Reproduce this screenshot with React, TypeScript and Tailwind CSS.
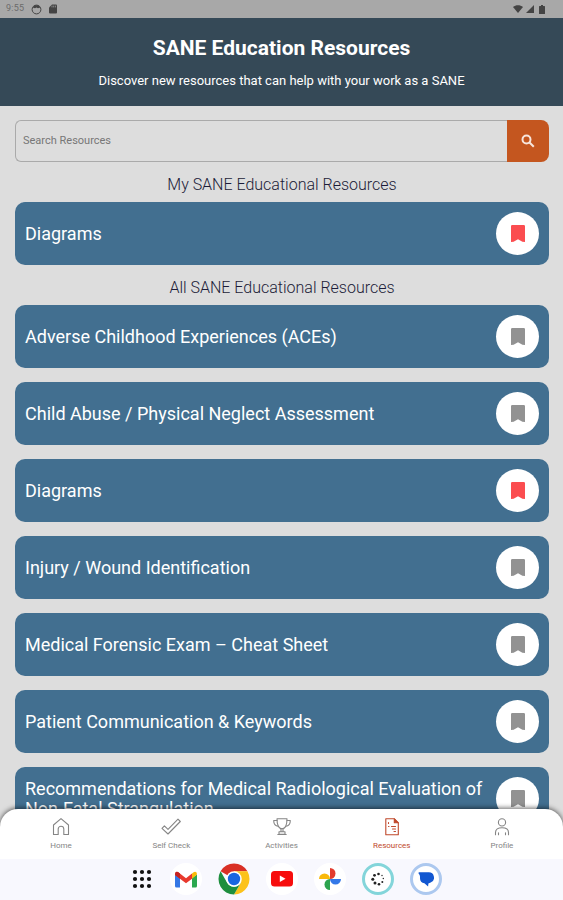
import type { ReactNode } from 'react'
import { clsx } from 'clsx'

interface Resource {
  title: string
  saved?: boolean
}

const RESOURCES: Resource[] = [
  { title: 'Adverse Childhood Experiences (ACEs)' },
  { title: 'Child Abuse / Physical Neglect Assessment' },
  { title: 'Diagrams', saved: true },
  { title: 'Injury / Wound Identification' },
  { title: 'Medical Forensic Exam – Cheat Sheet' },
  { title: 'Patient Communication & Keywords' },
  { title: 'Recommendations for Medical Radiological Evaluation of Non-Fatal Strangulation' },
]

function StatusBar() {
  return (
    <div className="flex h-[18px] shrink-0 items-center justify-between bg-[#a8a8a8] pr-[18px] pl-[6px] text-[#444]">
      <div className="flex items-center gap-[7px]">
        <span className="text-[9px] tracking-wide text-[#6b6b6b]">9:55</span>
        <svg width="11" height="11" viewBox="0 0 11 11" fill="none">
          <circle cx="5.5" cy="5.5" r="4.4" stroke="currentColor" />
          <path d="M1.6 3.6 3.5 1.2h4l1.9 2.4-2.4.7-1.5-.8-1.5.8z" fill="currentColor" />
        </svg>
        <svg width="8" height="10" viewBox="0 0 8 10" fill="currentColor">
          <path d="M3 .5h4a1 1 0 0 1 1 1v7a1 1 0 0 1-1 1H1a1 1 0 0 1-1-1v-5z" />
          <path d="M3 1.6v1.8M4.7 1.6v1.8M6.4 1.6v1.8" stroke="#a8a8a8" strokeWidth=".7" />
        </svg>
      </div>
      <div className="flex items-center gap-[3px]">
        <svg width="10" height="8" viewBox="0 0 10 8" fill="currentColor">
          <path d="M0 2C2.8-.4 7.2-.4 10 2L5 8z" />
        </svg>
        <svg width="8" height="8" viewBox="0 0 8 8" fill="currentColor">
          <path d="M8 0v8H0z" />
        </svg>
        <svg className="ml-[2px]" width="6" height="9" viewBox="0 0 6 9" fill="currentColor">
          <path d="M2 0h2v1h1.4q.6 0 .6.6v6.8q0 .6-.6.6H.6Q0 9 0 8.400V1.600Q0 1 .6 1H2z" />
        </svg>
      </div>
    </div>
  )
}

function ResourceCard({ title, saved = false }: Resource) {
  return (
    <li className="flex items-center justify-between gap-2 rounded-[10px] bg-[#426f90] p-[10px]">
      <a href="#" className="text-[18px] leading-5 text-white">
        {title}
      </a>
      <button
        type="button"
        aria-label={saved ? `Remove ${title} from my resources` : `Save ${title}`}
        aria-pressed={saved}
        className={clsx(
          'flex size-[43px] shrink-0 items-center justify-center rounded-full bg-white',
          saved ? 'text-[#fb4d50]' : 'text-[#929292]',
        )}
      >
        <svg width="14" height="17" viewBox="0 0 14 17" fill="currentColor">
          <path d="M1.200 0h11.600Q14 0 14 1.200V17l-2.600-.2L7 14.200 2.600 16.800 0 17V1.200Q0 0 1.200 0z" />
        </svg>
      </button>
    </li>
  )
}

function SectionTitle({ children }: { children: ReactNode }) {
  return (
    <h2 className="pt-[13px] pb-[7px] text-center text-[16px] leading-5 font-light text-[#1c1c38]">
      {children}
    </h2>
  )
}

interface TabProps {
  label: string
  active?: boolean
  children: ReactNode
}

function Tab({ label, active = false, children }: TabProps) {
  return (
    <a
      href="#"
      aria-current={active ? 'page' : undefined}
      className={clsx(
        'flex flex-1 flex-col items-center gap-[3px] pt-2 pb-[7px] text-[8px] leading-3',
        active ? 'text-[#c0492c]' : 'text-[#858585]',
      )}
    >
      <svg
        width="20"
        height="20"
        viewBox="0 0 20 20"
        fill="none"
        stroke="currentColor"
        strokeWidth="1.1"
        strokeLinejoin="round"
        strokeLinecap="round"
      >
        {children}
      </svg>
      {label}
    </a>
  )
}

function TabBar() {
  return (
    <nav className="relative z-10 flex rounded-t-[18px] bg-white px-[6px] shadow-[0_-1px_5px_rgba(0,0,0,0.6)]">
      <Tab label="Home">
        <path d="M2.500 8 10 1.600 17.500 8v9.500h-4.700V12a2.800 2.800 0 0 0-5.600 0v5.500H2.500z" />
      </Tab>
      <Tab label="Self Check">
        <path d="M1 11.300 3.400 8.900 7 12.400 17 2.200 19.300 4.500 7 17z" />
      </Tab>
      <Tab label="Activities">
        <path d="M5 1.700h10c0 6-1.500 10-5 10s-5-4-5-10z" />
        <path d="M5 3.500H1.700C1.700 7 3.500 9 6.300 9.200M15 3.500h3.300c0 3.500-1.800 5.500-4.600 5.700M9 11.700v3M11 11.700v3M7 14.700h6v2.700H7zM5.800 17.500h8.400" />
      </Tab>
      <Tab label="Resources" active>
        <path d="M3.800 1.800h8.500l4 4v12H3.800z" />
        <path d="M12.300 1.800v4h4z" fill="currentColor" />
        <path d="M6.500 5.500v1M6.500 9.500h.5M9.500 9.500h4M10.500 12h3M12 14.500h1.500" />
      </Tab>
      <Tab label="Profile">
        <circle cx="10" cy="5.400" r="3.600" />
        <path d="M3.500 17.800v-2.300c0-3.200 2.500-4.800 6.500-4.800s6.500 1.600 6.500 4.800v2.300M6.500 17.800v-2M13.500 17.800v-2" />
      </Tab>
    </nav>
  )
}

interface DockAppProps {
  label: string
  className?: string
  children: ReactNode
}

function DockApp({ label, className, children }: DockAppProps) {
  return (
    <button
      type="button"
      aria-label={label}
      className={clsx('flex size-8 items-center justify-center rounded-full', className)}
    >
      {children}
    </button>
  )
}

function Dock() {
  return (
    <div className="relative z-10 flex shrink-0 items-center justify-center gap-4 bg-[#f8f8fe] pt-1 pb-[5px] pl-1">
      <DockApp label="All apps" className="-mr-1">
        <svg width="20" height="20" viewBox="0 0 20 20" fill="#111">
          {[3, 10, 17].map((y) =>
            [3, 10, 17].map((x) => <circle key={`${x}-${y}`} cx={x} cy={y} r="2.100" />),
          )}
        </svg>
      </DockApp>
      <DockApp label="Gmail" className="bg-white">
        <svg width="22" height="17" viewBox="0 0 22 17">
          <path d="M0 3.500 5 7v9.500H1.500Q0 16.500 0 15z" fill="#3578e5" />
          <path d="M22 3.500 17 7v9.500h3.500q1.500 0 1.500-1.500z" fill="#2ca84f" />
          <path d="M17 2.500 19 1q3-1.200 3 2.500L17 7.700z" fill="#f9bb08" />
          <path d="M0 3.500Q0-.2 3 1l8 6.200L17 2.500v5.200l-6 4.600-6-4.600-5-3.700z" fill="#e8392d" />
          <path d="M0 3.500Q0-.2 3 1l2 1.500v5.200L0 4z" fill="#c5221f" />
        </svg>
      </DockApp>
      <DockApp label="Chrome">
        <svg className="shrink-0" width="32" height="32" viewBox="0 0 32 32">
          <path d="M16 16 2.580 8.250A15.500 15.500 0 0 1 29.420 8.250H16z" fill="#d93025" />
          <path d="M16 8.250h13.420A15.500 15.500 0 0 1 16 31.500l6.710-11.620z" fill="#fcc21b" />
          <path d="M2.580 8.250 9.290 19.880A7.750 7.750 0 0 0 22.710 19.880L16 31.500A15.500 15.500 0 0 1 2.580 8.250z" fill="#1e8e3e" />
          <circle cx="16" cy="16" r="7.750" fill="#fff" />
          <circle cx="16" cy="16" r="6.200" fill="#1a66e0" />
        </svg>
      </DockApp>
      <DockApp label="YouTube" className="bg-white">
        <svg width="22" height="16" viewBox="0 0 22 16">
          <rect width="22" height="15.500" rx="3.500" fill="#f70d0d" />
          <path d="M8.800 4.500 14.500 7.800 8.800 11z" fill="#fff" />
        </svg>
      </DockApp>
      <DockApp label="Photos" className="bg-white">
        <svg width="22" height="22" viewBox="0 0 22 22">
          <path d="M11 0a5.500 5.500 0 0 1 0 11z" fill="#e33b2e" />
          <path d="M22 11a5.500 5.500 0 0 1-11 0z" fill="#3478e8" />
          <path d="M11 22a5.500 5.500 0 0 1 0-11z" fill="#2da44e" />
          <path d="M0 11a5.500 5.500 0 0 1 11 0z" fill="#f9b90a" />
        </svg>
      </DockApp>
      <DockApp label="Activity" className="border-[3px] border-[#83d5da] bg-white">
        <svg width="14" height="14" viewBox="0 0 14 14" fill="#222">
          <circle cx="7.500" cy="2" r="1.300" />
          <circle cx="3.500" cy="3.300" r="1.400" />
          <circle cx="1.800" cy="7.300" r="1.500" />
          <circle cx="4" cy="11" r="1.500" />
          <circle cx="8" cy="12.200" r="1.300" />
          <circle cx="11.300" cy="10" r="1" />
          <circle cx="12.300" cy="6.500" r=".7" />
          <circle cx="11" cy="3.500" r=".7" />
        </svg>
      </DockApp>
      <DockApp label="Messages" className="border-[3px] border-[#acc8ef] bg-white">
        <svg width="16" height="15" viewBox="0 0 16 15">
          <path
            d="M1.200.3h9.300a5.300 5.300 0 0 1 2.200 10.200l-2.300.9-.3 3.200-3.700-3.300A5.300 5.300 0 0 1 2 6.200V4.500Q2 3 .6 1.400 0 .3 1.200.3z"
            fill="#1257d1"
          />
        </svg>
      </DockApp>
    </div>
  )
}

export default function App() {
  return (
    <div className="flex h-screen flex-col bg-[#dddddd] font-[Roboto,sans-serif]">
      <StatusBar />
      <header className="shrink-0 bg-[#354957] pt-[18px] pb-[15px] text-center text-white">
        <h1 className="text-[21px] leading-6 font-bold">SANE Education Resources</h1>
        <p className="mt-[11px] text-[13px] leading-5">
          Discover new resources that can help with your work as a SANE
        </p>
      </header>

      {/* Runs under the rounded corners of the tab bar */}
      <main className="-mb-5 min-h-0 flex-1 overflow-hidden pt-[14px] pr-[14px] pl-[15px]">
        <form className="flex h-[42px]" onSubmit={(e) => e.preventDefault()}>
          <input
            type="search"
            aria-label="Search Resources"
            placeholder="Search Resources"
            className="min-w-0 flex-1 rounded-l-md border border-r-0 border-[#aaaaaa] px-[7px] text-[11px] text-[#333] outline-none placeholder:text-[#777]"
          />
          <button
            type="submit"
            aria-label="Search"
            className="flex w-[42px] items-center justify-center rounded-r-lg bg-[#c4561f] text-[#f7e5dc]"
          >
            <svg width="14" height="14" viewBox="0 0 14 14" fill="none" stroke="currentColor" strokeWidth="2">
              <circle cx="5.500" cy="5.500" r="4" />
              <path d="m8.500 8.500 4.300 4.300" />
            </svg>
          </button>
        </form>

        <SectionTitle>My SANE Educational Resources</SectionTitle>
        <ul>
          <ResourceCard title="Diagrams" saved />
        </ul>

        <SectionTitle>All SANE Educational Resources</SectionTitle>
        <ul className="flex flex-col gap-[14px]">
          {RESOURCES.map((resource) => (
            <ResourceCard key={resource.title} {...resource} />
          ))}
        </ul>
      </main>

      <TabBar />
      <Dock />
    </div>
  )
}
